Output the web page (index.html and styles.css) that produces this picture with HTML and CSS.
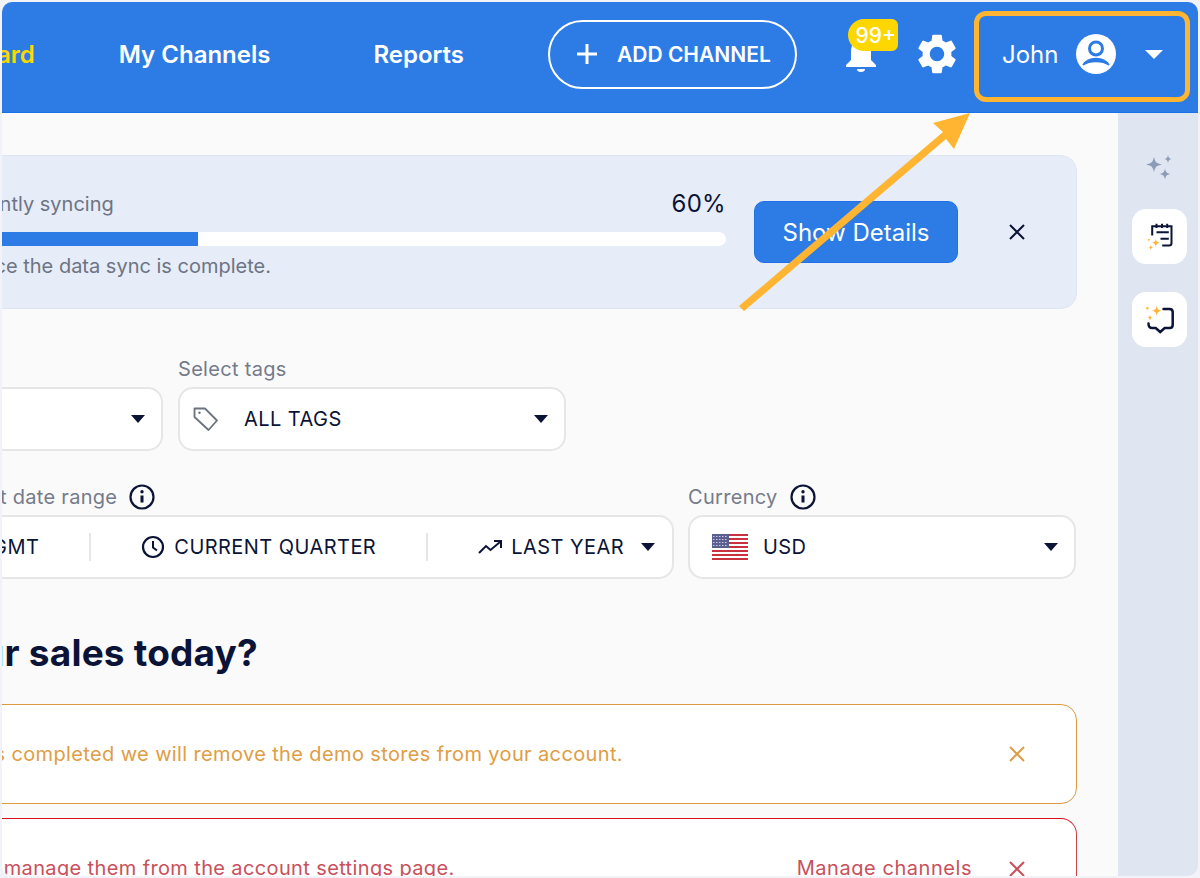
FILE: index.html
```html
<!DOCTYPE html>
<html lang="en">
<head>
<meta charset="utf-8">
<title>Dashboard</title>
<link rel="stylesheet" href="styles.css">
</head>
<body>
<div class="window">
  <header class="topbar">
    <nav class="nav">
      <a class="nav-link is-active">Dashboard</a>
      <a class="nav-link">My Channels</a>
      <a class="nav-link">Reports</a>
    </nav>
    <button class="add-btn">
      <svg class="add-icon" viewBox="0 0 22 22"><path d="M11 1v20M1 11h20" stroke="#fff" stroke-width="3" fill="none"/></svg>
      ADD CHANNEL
    </button>
    <div class="bell">
      <svg class="bell-icon" viewBox="0 0 34 34"><path d="M17 1c-6 0-10 4.500-10 11v9l-5 5v2h30v-2l-5-5v-9c0-6.500-4-11-10-11z" fill="#fff"/><path d="M13 30h8a4 3 0 0 1-8 0z" fill="#fff"/></svg>
      <span class="badge">99+</span>
    </div>
    <svg class="gear" viewBox="0 0 24 24"><path fill="#fff" d="M19.140 12.940c.04-.3.06-.61.06-.94 0-.32-.02-.64-.07-.94l2.030-1.580c.18-.14.23-.41.12-.61l-1.920-3.320c-.12-.22-.37-.29-.59-.22l-2.390.96c-.5-.38-1.030-.7-1.620-.94l-.36-2.540c-.04-.24-.24-.41-.48-.41h-3.840c-.24 0-.43.17-.47.41l-.36 2.540c-.59.24-1.130.57-1.620.94l-2.390-.96c-.22-.08-.47 0-.59.22L2.740 8.870c-.12.21-.08.47.12.61l2.030 1.580c-.05.3-.09.63-.09.94s.02.64.07.94l-2.030 1.580c-.18.14-.23.41-.12.61l1.920 3.320c.12.22.37.29.59.22l2.390-.96c.5.38 1.030.7 1.620.94l.36 2.540c.05.24.24.41.48.41h3.840c.24 0 .44-.17.47-.41l.36-2.540c.59-.24 1.130-.56 1.620-.94l2.390.96c.22.08.47 0 .59-.22l1.920-3.320c.12-.22.07-.47-.12-.61l-2.010-1.580zM12 15.600c-1.980 0-3.600-1.620-3.600-3.600s1.620-3.600 3.600-3.600 3.600 1.620 3.600 3.600-1.620 3.600-3.600 3.600z"/></svg>
    <div class="user">
      <span class="user-name">John</span>
      <svg class="avatar" viewBox="0 0 40 40"><circle cx="20" cy="20" r="20" fill="#fff"/><circle cx="20" cy="14.500" r="6.500" fill="#fff" stroke="#2d7be5" stroke-width="3"/><path d="M7 31c3-5 9-6.500 13-6.500s10 1.500 13 6.500c-3.500-2.500-8-3.500-13-3.500s-9.500 1-13 3.500z" fill="#2d7be5" stroke="#2d7be5" stroke-width="1.500"/></svg>
      <span class="caret caret-white"></span>
    </div>
  </header>
  <div class="body">
    <main class="content">
      <div class="column">
        <section class="sync">
          <div class="sync-main">
            <div class="sync-top">
              <span class="sync-title">Your stores are currently syncing</span>
              <span class="sync-pct">60%</span>
            </div>
            <div class="track"><div class="fill" style="width:44.4%"></div></div>
            <p class="sync-note">Data will be ready once the data sync is complete.</p>
          </div>
          <button class="details-btn">Show Details</button>
          <svg class="close close-dark" viewBox="0 0 18 18"><path d="M2 2l14 14M16 2L2 16" fill="none" stroke="currentColor" stroke-width="2"/></svg>
        </section>

        <div class="row row-first">
          <div class="field field-fixed">
            <label class="label">Select channels</label>
            <div class="select">
              <span class="select-text">ALL CHANNELS</span>
              <span class="caret"></span>
            </div>
          </div>
          <div class="field field-fixed">
            <label class="label">Select tags</label>
            <div class="select">
              <svg class="tag" viewBox="0 0 28 28"><path d="M2.500 3.500h10.500l12 12-8.500 9.500L2.500 12z" fill="none" stroke="#6b7280" stroke-width="1.800" stroke-linejoin="round"/><circle cx="7.500" cy="7.800" r="1.200" fill="#6b7280"/></svg>
              <span class="select-text">ALL TAGS</span>
              <span class="caret"></span>
            </div>
          </div>
        </div>

        <div class="row row-second">
          <div class="field field-grow">
            <label class="label label-right">Select date range
              <svg class="info" viewBox="0 0 26 26"><circle cx="13" cy="13" r="11.500" fill="none" stroke="#0b1437" stroke-width="2.200"/><path d="M13 11.500v7" stroke="#0b1437" stroke-width="3"/><circle cx="13" cy="7.800" r="1.700" fill="#0b1437"/></svg>
            </label>
            <div class="select date-box">
              <span class="date-text seg-tz">GMT</span>
              <span class="divider div-a"></span>
              <svg class="clock" viewBox="0 0 24 24"><circle cx="12" cy="12" r="10" fill="none" stroke="#0b1437" stroke-width="2.200"/><path d="M12 6v6.500l4 3" fill="none" stroke="#0b1437" stroke-width="2"/></svg>
              <span class="date-text">CURRENT QUARTER</span>
              <span class="divider div-b"></span>
              <svg class="trend" viewBox="0 0 24 14"><path d="M1 13l7-7 4.500 4L22 2" fill="none" stroke="#0b1437" stroke-width="2"/><path d="M16 1h7v7" fill="none" stroke="#0b1437" stroke-width="2"/></svg>
              <span class="date-text">LAST YEAR</span>
              <span class="caret caret-date"></span>
            </div>
          </div>
          <div class="field field-fixed">
            <label class="label">Currency
              <svg class="info" viewBox="0 0 26 26"><circle cx="13" cy="13" r="11.500" fill="none" stroke="#0b1437" stroke-width="2.200"/><path d="M13 11.500v7" stroke="#0b1437" stroke-width="3"/><circle cx="13" cy="7.800" r="1.700" fill="#0b1437"/></svg>
            </label>
            <div class="select">
              <svg class="flag" viewBox="0 0 36 26">
                <rect width="36" height="26" fill="#fff"/>
                <path d="M0 1h36M0 5h36M0 9h36M0 13h36M0 17h36M0 21h36M0 25h36" stroke="#c8313e" stroke-width="2"/>
                <rect width="17" height="14" fill="#5a5f8f"/>
                <path d="M1 2.500h15M1 5.500h15M1 8.500h15M1 11.500h15" stroke="#c9cbe0" stroke-width="1" stroke-dasharray="1.500 1.500"/>
              </svg>
              <span class="select-text">USD</span>
              <span class="caret"></span>
            </div>
          </div>
        </div>

        <h1 class="heading">How are your sales today?</h1>

        <div class="alert alert-warn">
          <span class="alert-text">Once the onboarding is completed we will remove the demo stores from your account.</span>
          <svg class="close" viewBox="0 0 18 18"><path d="M2 2l14 14M16 2L2 16" fill="none" stroke="currentColor" stroke-width="2"/></svg>
        </div>
        <div class="alert alert-err">
          <span class="alert-text">Some channels are disconnected, manage them from the account settings page.</span>
          <a class="alert-link">Manage channels</a>
          <svg class="close" viewBox="0 0 18 18"><path d="M2 2l14 14M16 2L2 16" fill="none" stroke="currentColor" stroke-width="2"/></svg>
        </div>
      </div>
    </main>
    <aside class="rail">
      <svg class="rail-spark" viewBox="0 0 30 30"><path d="M9 4.500c1 5.500 2.500 7 8 8-5.500 1-7 2.500-8 8-1-5.500-2.500-7-8-8 5.500-1 7-2.500 8-8z" fill="#8d9cb5"/><path d="M23 3c.5 2.500 1 3.500 3.500 4-2.500.5-3 1.500-3.500 4-.5-2.500-1-3.500-3.500-4 2.500-.5 3-1.500 3.500-4zM20 16.500c.7 3.700 1.800 4.800 5.500 5.500-3.700.7-4.800 1.800-5.500 5.500-.7-3.700-1.800-4.800-5.500-5.500 3.700-.7 4.800-1.800 5.500-5.500z" fill="#8d9cb5"/></svg>
      <div class="rail-card">
        <svg class="rail-icon" viewBox="0 0 30 30"><path d="M7.200 13.500V4.200h19.300V21c0 1.700-.8 2.500-2.500 2.500h-6.800" fill="none" stroke="#0b1437" stroke-width="2"/><path d="M11.500 1.800V6M17 1.800V6M22.200 1.800V6M11.500 10.200h12.300M15.500 16.800h8.300" stroke="#0b1437" stroke-width="2" fill="none"/><path d="M10.800 16.800c.5 2.800 1.200 3.500 4 4-2.800.5-3.500 1.200-4 4-.5-2.800-1.200-3.500-4-4 2.800-.5 3.500-1.200 4-4zM5.800 23c.3 1.700.8 2.200 2.500 2.500-1.700.3-2.200.8-2.500 2.500-.3-1.700-.8-2.200-2.500-2.500 1.700-.3 2.200-.8 2.500-2.500z" fill="#ffb432"/><circle cx="3.800" cy="17.800" r="1" fill="#ffb432"/></svg>
      </div>
      <div class="rail-card">
        <svg class="rail-icon" viewBox="0 0 30 30"><path d="M18.500 4h6c2 0 3.200 1 3.200 3v13c0 2-1 3-3 3h-5l-4.500 4-4.500-4H7c-2 0-3.500-1.500-3.500-4.500" fill="none" stroke="#0b1437" stroke-width="2.500" stroke-linecap="round"/><path d="M11.700.8c.7 3.500 1.500 4.300 5 5-3.500.7-4.300 1.500-5 5-.7-3.500-1.500-4.300-5-5 3.500-.7 4.300-1.500 5-5z" fill="#ffb432"/><path d="M5 9.800c.4 2.200.8 2.600 3 3-2.200.4-2.600.8-3 3-.4-2.200-.8-2.600-3-3 2.200-.4 2.600-.8 3-3z" fill="#ffb432"/><circle cx="2.300" cy="3.200" r="1.200" fill="#ffb432"/></svg>
      </div>
    </aside>
  </div>
</div>
<div class="highlight"></div>
<svg class="arrow" viewBox="0 0 1200 878"><polygon points="739,306 943,132 933,123 970,113 954,149 946,139 744,311" fill="#ffb432"/></svg>
</body>
</html>
```

FILE: styles.css
```css
* { box-sizing: border-box; }
html, body { margin: 0; height: 100%; }
body {
  background: #f2f3f9;
  font-family: Inter, "Liberation Sans", sans-serif;
  color: #0b1437;
  overflow: hidden;
}
.window {
  margin: 2px;
  height: 874px;
  border-radius: 10px;
  overflow: hidden;
  display: flex;
  flex-direction: column;
  background: #fafafa;
}
.topbar {
  height: 111px;
  flex-shrink: 0;
  background: #2d7be5;
  border-bottom: 1px solid #1a72e8;
  display: flex;
  align-items: center;
  justify-content: flex-end;
  padding-right: 9px;
  padding-bottom: 6px;
  color: #fff;
}
.nav {
  display: flex;
  align-items: center;
  gap: 103px;
  flex-shrink: 0;
  margin-right: 84px;
}
.nav-link {
  font-size: 24px;
  font-weight: 600;
  white-space: nowrap;
}
.is-active { color: #ffd700; margin-right: -19px; }
.add-btn {
  width: 249px;
  height: 69px;
  flex-shrink: 0;
  background: transparent;
  border: 2px solid #fff;
  border-radius: 35px;
  color: #fff;
  font: 600 21px Inter, sans-serif;
  display: flex;
  align-items: center;
  gap: 19px;
  padding: 0 0 0 26px;
  margin-right: 47px;
}
.add-icon { width: 22px; height: 22px; }
.bell { position: relative; width: 34px; height: 34px; flex-shrink: 0; margin-right: 35px; margin-top: 4px; }
.bell-icon { width: 34px; height: 34px; display: block; }
.badge {
  position: absolute;
  left: 4px;
  top: -20px;
  width: 50px;
  height: 32px;
  background: #ffd700;
  color: #fff;
  border-radius: 16px 6px 6px 16px;
  font-size: 21px;
  font-weight: 500;
  display: flex;
  align-items: center;
  justify-content: flex-end;
  padding-right: 2px;
}
.gear { width: 48px; height: 48px; flex-shrink: 0; margin-right: 14px; }
.user {
  width: 214px;
  height: 89px;
  flex-shrink: 0;
  display: flex;
  align-items: center;
  padding-left: 27px;
}
.user-name { font-size: 24px; font-weight: 400; width: 74px; }
.avatar { width: 40px; height: 40px; margin-right: 29px; }
.caret {
  width: 0;
  height: 0;
  border-left: 7.500px solid transparent;
  border-right: 7.500px solid transparent;
  border-top: 8px solid #0b1437;
  flex-shrink: 0;
}
.caret-white { border-left-width: 9px; border-right-width: 9px; border-top: 9px solid #fff; }

.body { flex: 1; display: flex; min-height: 0; }
.content {
  flex: 1;
  display: flex;
  justify-content: flex-end;
  overflow: hidden;
  padding-right: 41px;
  background: #fafafa;
}
.column { width: 1302px; flex-shrink: 0; padding-top: 42px; }

.sync {
  height: 154px;
  background: #e6ecf8;
  border: 1px solid #dfe6f3;
  border-radius: 16px;
  display: flex;
  align-items: center;
  padding-right: 50px;
}
.sync-main { flex: 1; margin-top: 2px; }
.sync-top { display: flex; justify-content: space-between; align-items: center; height: 32px; }
.sync-title { font-size: 20px; color: #6d7484; padding-left: 25px; }
.sync-pct { font-size: 24px; letter-spacing: 0.3px; }
.track { height: 14px; background: #fff; border-radius: 7px; margin-top: 12px; overflow: hidden; }
.fill { height: 100%; background: #2d7be5; }
.sync-note { margin: 7px 0 0; font-size: 20px; color: #6d7484; line-height: 26px; padding-left: 20px; }
.details-btn {
  width: 204px;
  height: 62px;
  background: #2d7be5;
  color: #fff;
  border: 1px solid #1f72e6;
  border-radius: 10px;
  font: 400 24px Inter, sans-serif;
  margin: 0 50px 0 28px;
  flex-shrink: 0;
}
.close { width: 18px; height: 18px; flex-shrink: 0; }
.close-dark { color: #0b1437; }

.row { display: flex; gap: 15px; }
.row-first { margin-top: 41px; }
.row-second { margin-top: 27px; gap: 14px; padding-right: 1px; }
.field { display: flex; flex-direction: column; }
.field-fixed { width: 388px; flex-shrink: 0; }
.field-grow { flex: 1; min-width: 0; }
.label {
  height: 37px;
  font-size: 20px;
  letter-spacing: 0.3px;
  color: #757b8a;
  display: flex;
  align-items: center;
  gap: 12px;
}
.label-right { padding-left: 171px; }
.select {
  height: 64px;
  background: #fff;
  border: 2px solid #e6e6e6;
  border-radius: 15px;
  display: flex;
  align-items: center;
  padding: 0 16px 0 12px;
}
.select-text { font-size: 20px; letter-spacing: 0.45px; flex: 1; padding-left: 24px; }
.tag { width: 28px; height: 28px; flex-shrink: 0; }
.flag { width: 36px; height: 26px; margin-left: 10px; flex-shrink: 0; }
.flag + .select-text { padding-left: 15px; }
.info { width: 26px; height: 26px; flex-shrink: 0; }
.date-box { justify-content: flex-end; padding-right: 17px; }
.date-text { font-size: 20px; letter-spacing: 0.45px; white-space: nowrap; }
.divider { width: 2px; height: 28px; background: #e6e6e6; flex-shrink: 0; }
.div-a { margin: 0 50px; }
.div-b { margin: 0 50px; }
.clock { width: 24px; height: 24px; margin-right: 9px; flex-shrink: 0; }
.trend { width: 24px; height: 14px; margin-right: 9px; flex-shrink: 0; }
.caret-date { margin-left: 17px; }

.heading {
  font-size: 37px;
  font-weight: 700;
  margin: 50px 0 0;
  height: 75px;
  line-height: 48px;
  text-align: right;
  padding-right: 819px;
  letter-spacing: 0.2px;
  white-space: nowrap;
}
.alert {
  height: 100px;
  background: #fff;
  border-radius: 16px;
  display: flex;
  align-items: center;
  justify-content: flex-end;
  padding-right: 50px;
  margin-bottom: 14px;
  flex-shrink: 0;
}
.alert-text { font-size: 20px; letter-spacing: 0.37px; white-space: nowrap; }
.alert-link { font-size: 20px; letter-spacing: 0.55px; white-space: nowrap; }
.alert-warn { border: 1.500px solid #dd9a3f; color: #df9d45; }
.alert-warn .alert-text { margin-right: 385px; }
.alert-err { border: 1.500px solid #c9434f; border-top-color: #d80f1c; color: #c9505b; height: 110px; align-items: flex-start; padding-top: 37px; }
.alert-err .close { margin-top: 4px; }
.alert-err .alert-text { margin-right: 342px; }
.alert-link { margin-right: 36px; }

.rail {
  width: 80px;
  flex-shrink: 0;
  background: #e0e6f1;
  display: flex;
  flex-direction: column;
  align-items: center;
  padding: 39px 0 0 3px;
}
.rail-spark { width: 30px; height: 30px; margin-bottom: 27px; }
.rail-card {
  width: 55px;
  height: 55px;
  background: #fff;
  border-radius: 14px;
  display: flex;
  align-items: center;
  justify-content: center;
  margin-bottom: 28px;
}
.rail-icon { width: 30px; height: 30px; }

.highlight {
  position: absolute;
  left: 974px;
  top: 11px;
  width: 216px;
  height: 91px;
  border: 5px solid #ffb432;
  border-radius: 12px;
  pointer-events: none;
}
.arrow {
  position: absolute;
  left: 0;
  top: 0;
  width: 1200px;
  height: 878px;
  pointer-events: none;
}
```
